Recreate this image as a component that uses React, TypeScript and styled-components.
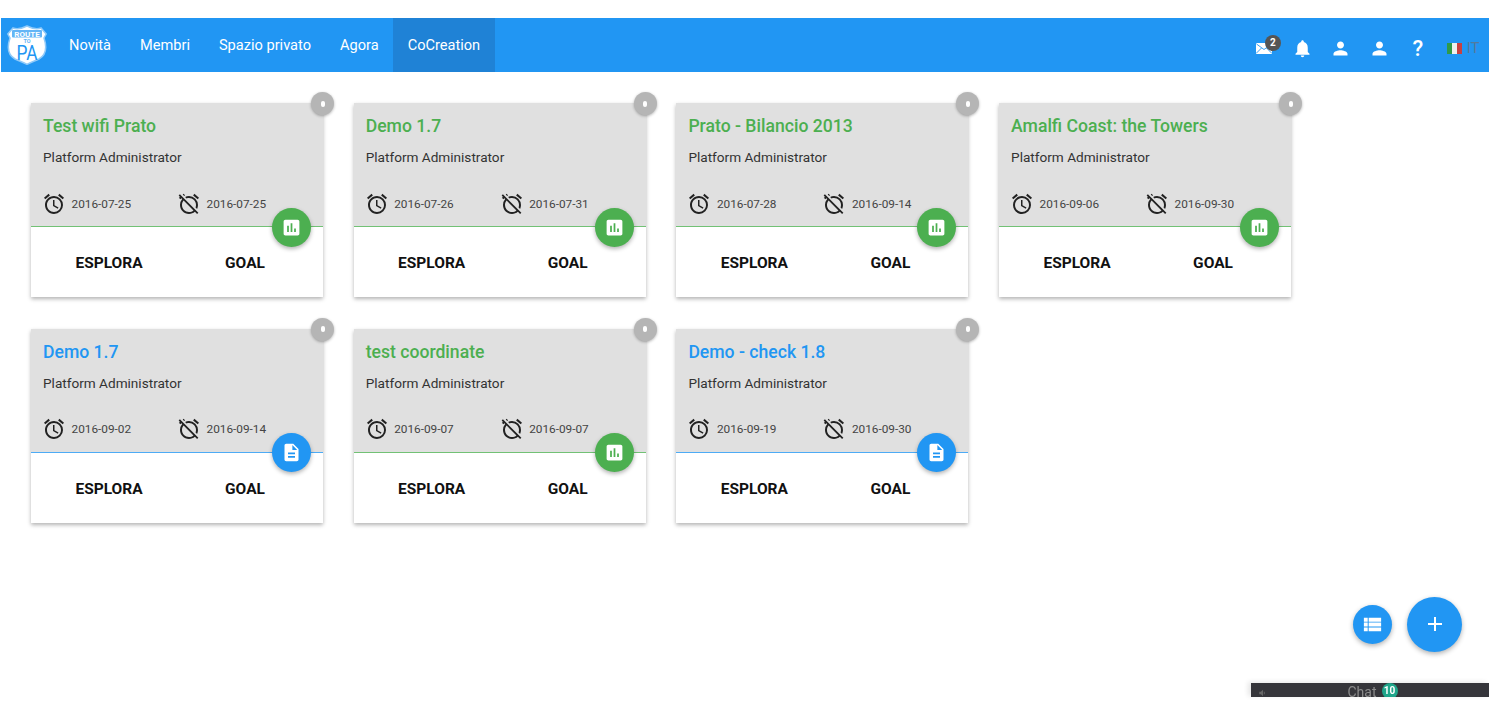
import React from 'react';
import styled, { createGlobalStyle } from 'styled-components';
import {
  MdAdd,
  MdAlarm,
  MdAlarmOff,
  MdAssessment,
  MdDescription,
  MdNotifications,
  MdPerson,
  MdViewList,
} from 'react-icons/md';

const GREEN = '#4caf50';
const BLUE = '#2196f3';

const GlobalStyle = createGlobalStyle`
  html, body {
    margin: 0;
    padding: 0;
    background: #fff;
    font-family: Roboto, "Liberation Sans", sans-serif;
  }
`;

const Page = styled.div`
  padding: 18px 1px 0;
  height: 696px;
  box-sizing: border-box;
  overflow: hidden;
`;

const Header = styled.header`
  display: flex;
  align-items: stretch;
  height: 54px;
  background: ${BLUE};
  color: #fff;
`;

const LogoBox = styled.div`
  display: flex;
  align-items: center;
  width: 53.5px;
  padding-left: 6px;
  box-sizing: border-box;
`;

const Nav = styled.nav`
  display: flex;
`;

const NavItem = styled.a<{ $active?: boolean }>`
  display: flex;
  align-items: center;
  padding: 0 14.5px 1px;
  font-size: 14.6px;
  background: ${({ $active }) => ($active ? '#1f82d6' : 'transparent')};
`;

const HeaderIcons = styled.div`
  display: flex;
  align-items: center;
  margin-left: auto;
  padding: 6px 9.5px 0 0;
`;

const IconSlot = styled.div`
  position: relative;
  display: flex;
  align-items: center;
  justify-content: center;
  width: 38.6px;
  height: 22px;
  font-size: 21px;
`;

const CountBadge = styled.span`
  position: absolute;
  top: -2px;
  right: 2px;
  width: 16px;
  height: 16px;
  border-radius: 50%;
  background: #555;
  color: #fff;
  font-size: 10px;
  font-weight: 700;
  line-height: 16px;
  text-align: center;
`;

const Question = styled.span`
  font-size: 22px;
  font-weight: 500;
`;

const Lang = styled.div`
  display: flex;
  align-items: center;
  gap: 5px;
  margin-left: 9.5px;
  font-size: 15px;
  color: #557a9c;
`;

const Flag = styled.div`
  display: flex;
  width: 15px;
  height: 11px;
  background: linear-gradient(90deg, #2f9a49 0 33%, #eef0ee 33% 66%, #c9403f 66%);
`;

const Grid = styled.main`
  display: grid;
  grid-template-columns: repeat(4, 292px);
  column-gap: 30.7px;
  row-gap: 31.5px;
  padding: 31px 30px 0;
`;

const Card = styled.article`
  position: relative;
  height: 194px;
  background: #fff;
  box-shadow: 0 2px 4px rgba(0, 0, 0, 0.3);
`;

const CardTop = styled.div<{ $line: string }>`
  height: 124px;
  padding: 12px 12px 0;
  box-sizing: border-box;
  background: #e0e0e0;
  border-bottom: 1px solid ${({ $line }) => $line};
`;

const Title = styled.h3<{ $color: string }>`
  margin: 0;
  font-size: 17.6px;
  font-weight: 500;
  line-height: 22px;
  color: ${({ $color }) => $color};
`;

const Owner = styled.div`
  margin-top: 10px;
  font-size: 13.6px;
  line-height: 20px;
  color: #333;
`;

const Dates = styled.div`
  display: grid;
  grid-template-columns: 135px 1fr;
  margin-top: 24.5px;
  margin-left: -1px;
`;

const DateCell = styled.div`
  display: flex;
  align-items: center;
  gap: 5.5px;
  font-size: 11.8px;
  color: #444;
  svg {
    font-size: 24px;
    color: #222;
    flex-shrink: 0;
  }
`;

const Actions = styled.div`
  display: grid;
  grid-template-columns: 1fr 1fr;
  padding: 2px 10px 0;
  height: 70px;
  box-sizing: border-box;
  align-items: center;
`;

const ActionLabel = styled.a`
  font-size: 15.5px;
  font-weight: 700;
  color: #111;
  text-align: center;
`;

const CloseDot = styled.div`
  position: absolute;
  top: -11px;
  right: -11px;
  display: flex;
  align-items: center;
  justify-content: center;
  width: 23px;
  height: 23px;
  border-radius: 50%;
  background: #b5b5b5;
  box-shadow: 0 1px 3px rgba(0, 0, 0, 0.3);
  &::after {
    content: '';
    width: 4px;
    height: 6px;
    border-radius: 2px;
    background: #fff;
  }
`;

const KindButton = styled.div<{ $color: string }>`
  position: absolute;
  top: 104.5px;
  right: 12px;
  display: flex;
  align-items: center;
  justify-content: center;
  width: 39px;
  height: 39px;
  border-radius: 50%;
  background: ${({ $color }) => $color};
  color: #fff;
  font-size: 21px;
  box-shadow: 0 2px 4px rgba(0, 0, 0, 0.3);
`;

const Fab = styled.div<{ $size: number; $right: number; $iconSize: number }>`
  position: fixed;
  top: ${({ $size }) => 624 - $size / 2}px;
  right: ${({ $right }) => $right}px;
  display: flex;
  align-items: center;
  justify-content: center;
  width: ${({ $size }) => $size}px;
  height: ${({ $size }) => $size}px;
  border-radius: 50%;
  background: ${BLUE};
  color: #fff;
  font-size: ${({ $iconSize }) => $iconSize}px;
  box-shadow: 0 2px 5px rgba(0, 0, 0, 0.3);
`;

const ChatBar = styled.div`
  position: fixed;
  top: 683px;
  right: 1px;
  display: flex;
  align-items: center;
  justify-content: center;
  gap: 5px;
  width: 238px;
  height: 14px;
  overflow: hidden;
  background: #35353a;
  color: #8b8b8b;
  font-size: 14px;
  line-height: 14px;
  padding: 4px 0 0 5px;
  box-sizing: border-box;
  box-shadow: -3px -1px 5px rgba(0, 0, 0, 0.1);
`;

const ChatSound = styled.svg`
  position: absolute;
  left: 6px;
  top: 5px;
`;

const ChatCount = styled.span`
  width: 16px;
  height: 16px;
  border-radius: 50%;
  background: #1fa58a;
  color: #fff;
  font-size: 10px;
  font-weight: 700;
  line-height: 16px;
  text-align: center;
  margin-top: -3px;
`;

const Logo = () => (
  <svg width="40" height="40" viewBox="0 0 40 40">
    <path
      d="M6 3C10 4.500 15 3.500 20 1C25 3.500 30 4.500 34 3L39.200 9L37 13C40 22 39 30 32 34C28 36 24 37 20 39.300C16 37 12 36 8 34C1 30 0 22 3 13L0.800 9Z"
      fill="#fff"
      stroke="#90caf9"
      strokeWidth="1.500"
    />
    <rect x="5" y="5" width="30" height="7.500" rx="1" fill="#64b5f6" />
    <text x="20" y="11.500" fontSize="8" fontWeight="700" textAnchor="middle" fill="#fff" fontFamily="Roboto">
      ROUTE
    </text>
    <text x="20" y="18" fontSize="5.500" fontWeight="700" textAnchor="middle" fill="#64b5f6" fontFamily="Roboto">
      TO
    </text>
    <text
      x="20"
      y="35"
      fontSize="21"
      textAnchor="middle"
      textLength="21"
      lengthAdjust="spacingAndGlyphs"
      fill={BLUE}
      fontFamily="Roboto"
    >
      PA
    </text>
  </svg>
);

const MailIcon = () => (
  <svg width="16" height="11" viewBox="0 0 16 11">
    <rect width="16" height="11" rx="1" fill="#fff" />
    <path d="M0.500 1L8 6.500L15.500 1M0.500 10L5.500 5M15.500 10L10.500 5" fill="none" stroke={BLUE} strokeWidth="0.900" />
  </svg>
);

type Room = {
  title: string;
  start: string;
  end: string;
  kind: 'chart' | 'doc';
};

const rooms: Room[] = [
  { title: 'Test wifi Prato', start: '2016-07-25', end: '2016-07-25', kind: 'chart' },
  { title: 'Demo 1.7', start: '2016-07-26', end: '2016-07-31', kind: 'chart' },
  { title: 'Prato - Bilancio 2013', start: '2016-07-28', end: '2016-09-14', kind: 'chart' },
  { title: 'Amalfi Coast: the Towers', start: '2016-09-06', end: '2016-09-30', kind: 'chart' },
  { title: 'Demo 1.7', start: '2016-09-02', end: '2016-09-14', kind: 'doc' },
  { title: 'test coordinate', start: '2016-09-07', end: '2016-09-07', kind: 'chart' },
  { title: 'Demo - check 1.8', start: '2016-09-19', end: '2016-09-30', kind: 'doc' },
];

const navItems = ['Novità', 'Membri', 'Spazio privato', 'Agora', 'CoCreation'];

const App = () => (
  <Page>
    <GlobalStyle />
    <Header>
      <LogoBox>
        <Logo />
      </LogoBox>
      <Nav>
        {navItems.map((item) => (
          <NavItem key={item} $active={item === 'CoCreation'}>
            {item}
          </NavItem>
        ))}
      </Nav>
      <HeaderIcons>
        <IconSlot>
          <MailIcon />
          <CountBadge>2</CountBadge>
        </IconSlot>
        <IconSlot>
          <MdNotifications />
        </IconSlot>
        <IconSlot>
          <MdPerson />
        </IconSlot>
        <IconSlot>
          <MdPerson />
        </IconSlot>
        <IconSlot>
          <Question>?</Question>
        </IconSlot>
        <Lang>
          <Flag />
          IT
        </Lang>
      </HeaderIcons>
    </Header>

    <Grid>
      {rooms.map((room, i) => {
        const color = room.kind === 'chart' ? GREEN : BLUE;
        const line = room.kind === 'chart' ? '#72c175' : '#4dabf5';
        return (
          <Card key={i}>
            <CardTop $line={line}>
              <Title $color={color}>{room.title}</Title>
              <Owner>Platform Administrator</Owner>
              <Dates>
                <DateCell>
                  <MdAlarm />
                  {room.start}
                </DateCell>
                <DateCell>
                  <MdAlarmOff />
                  {room.end}
                </DateCell>
              </Dates>
            </CardTop>
            <Actions>
              <ActionLabel>ESPLORA</ActionLabel>
              <ActionLabel>GOAL</ActionLabel>
            </Actions>
            <CloseDot />
            <KindButton $color={color}>
              {room.kind === 'chart' ? <MdAssessment /> : <MdDescription />}
            </KindButton>
          </Card>
        );
      })}
    </Grid>

    <Fab $size={39} $right={98} $iconSize={23}>
      <MdViewList />
    </Fab>
    <Fab $size={55} $right={28} $iconSize={24}>
      <MdAdd />
    </Fab>
    <ChatBar>
      <ChatSound width="12" height="10" viewBox="0 0 24 24" fill="#666">
        <path d="M3 9v6h4l5 5V4L7 9H3zm13.500 3A4.500 4.500 0 0 0 14 7.970v8.050A4.500 4.500 0 0 0 16.500 12z" />
      </ChatSound>
      Chat
      <ChatCount>10</ChatCount>
    </ChatBar>
  </Page>
);

export default App;
